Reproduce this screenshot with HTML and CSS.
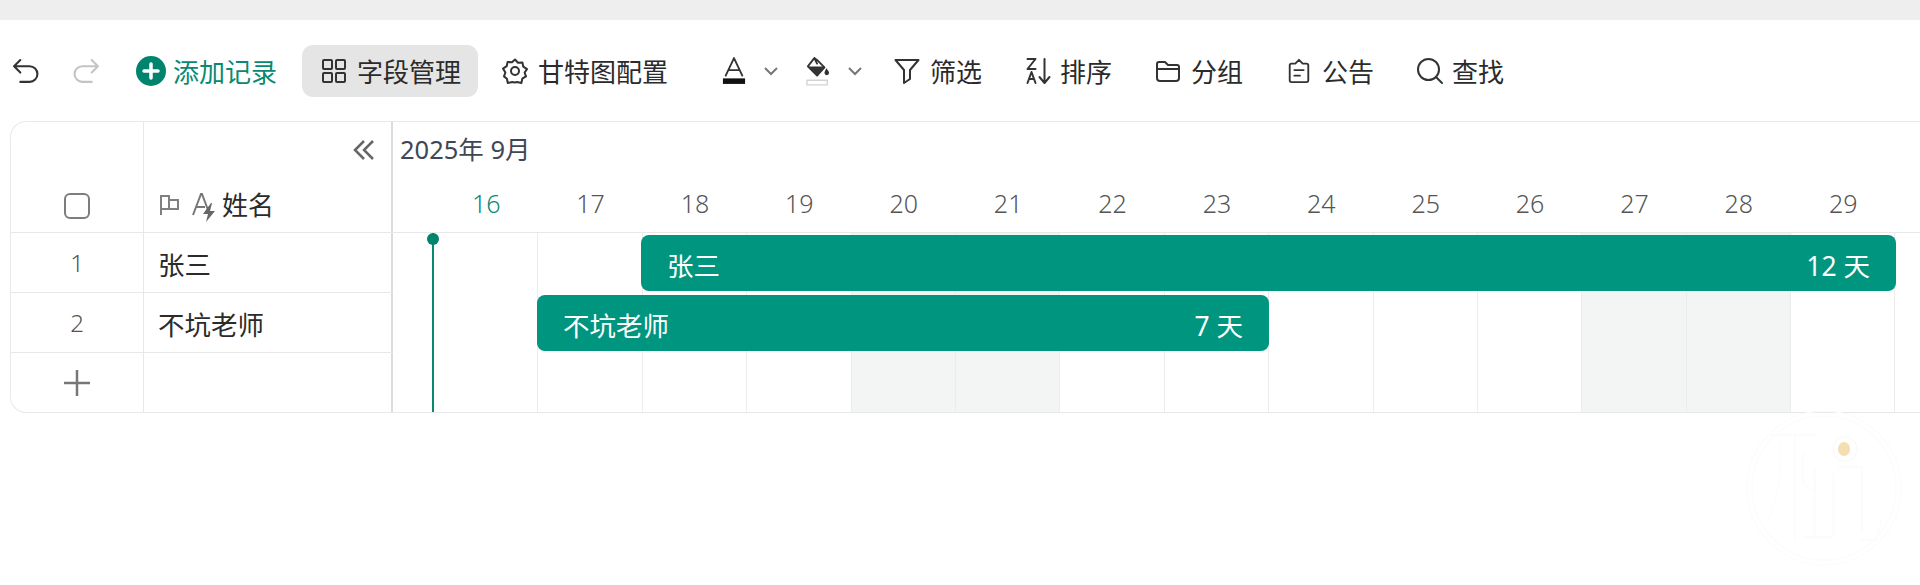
FILE: index.html
```html
<!DOCTYPE html>
<html lang="zh-CN">
<head>
    <meta charset="UTF-8">
    <meta name="viewport" content="width=device-width, initial-scale=1.0">
    <title>甘特图</title>
    <link rel="stylesheet" href="styles.css">
</head>
<body>
    <div class="top-strip"></div>

    <div class="toolbar">
        <div class="history">
            <svg class="icon icon-history" viewBox="0 0 26 26"><path d="M8 2 2 8l6 6M2 8h15a7 7 0 0 1 0 15H8"/></svg>
            <svg class="icon icon-history icon-off" viewBox="0 0 26 26"><path d="m18 2 6 6-6 6M24 8H9a7 7 0 0 0 0 15h9"/></svg>
        </div>
        <div class="tool tool-add">
            <svg class="icon icon-plus" viewBox="0 0 30 30"><circle cx="15" cy="15" r="15"/><path d="M15 8v14M8 15h14"/></svg>
            <span>添加记录</span>
        </div>
        <div class="tool tool-active">
            <svg class="icon" viewBox="0 0 26 26"><rect x="2" y="2" width="9" height="9" rx="1"/><rect x="15" y="2" width="9" height="9" rx="1"/><rect x="2" y="15" width="9" height="9" rx="1"/><rect x="15" y="15" width="9" height="9" rx="1"/></svg>
            <span>字段管理</span>
        </div>
        <div class="tool tool-gear">
            <svg class="icon" viewBox="0 0 26 26"><path d="M13 1.500l3 3.200 4.400-.3.900 4.300 3.700 2.400L22.600 14.500l1.400 3.900-3.700 2.300-.9 4.300-4.400-1L13 24.500l-2.800-.5-4.400 1-.9-4.300L2 18.400l1.400-3.900L1 10.600l3.700-2.400.9-4.300 4.400.3z"/><circle cx="13" cy="13" r="4"/></svg>
            <span>甘特图配置</span>
        </div>
        <div class="tool-format">
            <svg class="icon icon-color" viewBox="0 0 26 30"><path d="M4 20 13 1l9 19M7 14h12"/><rect class="fill-black" x="1" y="23" width="24" height="6"/></svg>
            <svg class="chevron" viewBox="0 0 16 10"><path d="m2 2 6 6 6-6"/></svg>
        </div>
        <div class="tool-format tool-bucket">
            <svg class="icon icon-color" viewBox="0 0 26 32"><path d="M9 2 2 11l10 10 8-9-7-7zM9 2l3 6"/><path class="fill-dark" d="M2 11h18l-8 10z"/><path class="fill-dark" d="M22 13c2 2.500 3 4 3 5a2.500 2.500 0 0 1-5 0c0-1 1-2.500 2-5z"/><rect class="box-light" x="1" y="26" width="22" height="5"/></svg>
            <svg class="chevron" viewBox="0 0 16 10"><path d="m2 2 6 6 6-6"/></svg>
        </div>
        <div class="tool tool-filter">
            <svg class="icon" viewBox="0 0 26 26"><path d="M1.500 2h23l-8.500 10v9l-6 4V12z"/></svg>
            <span>筛选</span>
        </div>
        <div class="tool tool-wide">
            <svg class="icon icon-sort" viewBox="0 0 26 28"><path d="M2 2h8L2 12h8M2 26l4-11 4 11M3.500 22h5M19 2v24M14 20l5 6 5-6"/></svg>
            <span>排序</span>
        </div>
        <div class="tool">
            <svg class="icon" viewBox="0 0 26 24"><path d="M2 5a2 2 0 0 1 2-2h6l3 3h9a2 2 0 0 1 2 2v11a3 3 0 0 1-3 3H5a3 3 0 0 1-3-3zM2 10h22"/></svg>
            <span>分组</span>
        </div>
        <div class="tool">
            <svg class="icon" viewBox="0 0 26 28"><path d="M9 6 13 2l4 4h4a2 2 0 0 1 2 2v16a2 2 0 0 1-2 2H5a2 2 0 0 1-2-2V8a2 2 0 0 1 2-2zM8 13h10M8 19h6"/></svg>
            <span>公告</span>
        </div>
        <div class="tool tool-wide">
            <svg class="icon icon-search" viewBox="0 0 28 28"><circle cx="12.500" cy="12.500" r="10.500"/><path d="m20 20 6 6"/></svg>
            <span>查找</span>
        </div>
    </div>

    <div class="gantt">
        <div class="side">
            <div class="side-head index-col">
                <span class="checkbox"></span>
            </div>
            <div class="side-head name-col">
                <svg class="collapse" viewBox="0 0 22 20"><path d="M11 1 2 10l9 9M20 1l-9 9 9 9"/></svg>
                <div class="field-title">
                    <svg class="flag" viewBox="0 0 22 22"><path d="M2 21V2h8v4h9v9h-9V6M10 15H2"/></svg>
                    <svg class="field-type" viewBox="0 0 26 30"><path d="M2 23 10 2h1l6 16M5 15h9"/><path class="fill-grey" d="M20 11 12 22h5l-2 8 9-11h-5l2-8z"/></svg>
                    <span>姓名</span>
                </div>
            </div>

            <div class="cell index-col">1</div>
            <div class="cell name-col">张三</div>
            <div class="cell index-col">2</div>
            <div class="cell name-col">不坑老师</div>
            <div class="cell index-col">
                <svg class="add-row" viewBox="0 0 26 26"><path d="M13 0v26M0 13h26"/></svg>
            </div>
            <div class="cell name-col"></div>
        </div>

        <div class="timeline">
            <div class="month">2025年 9月</div>
            <div class="days">
                <div class="day day-today">16</div>
                <div class="day">17</div>
                <div class="day">18</div>
                <div class="day">19</div>
                <div class="day">20</div>
                <div class="day">21</div>
                <div class="day">22</div>
                <div class="day">23</div>
                <div class="day">24</div>
                <div class="day">25</div>
                <div class="day">26</div>
                <div class="day">27</div>
                <div class="day">28</div>
                <div class="day">29</div>
            </div>
            <div class="chart">
                <div class="col"></div>
                <div class="col"></div>
                <div class="col"></div>
                <div class="col"></div>
                <div class="col col-off"></div>
                <div class="col col-off"></div>
                <div class="col"></div>
                <div class="col"></div>
                <div class="col"></div>
                <div class="col"></div>
                <div class="col"></div>
                <div class="col col-off"></div>
                <div class="col col-off"></div>
                <div class="col"></div>
                <div class="col"></div>

                <div class="today-line"></div>
                <div class="bar bar-one"><span>张三</span><span>12 天</span></div>
                <div class="bar bar-two"><span>不坑老师</span><span>7 天</span></div>
            </div>
        </div>
    </div>

    <svg class="watermark" viewBox="0 0 170 170">
        <circle cx="85" cy="85" r="77"/>
        <circle cx="85" cy="85" r="72"/>
        <path d="M29 32h50M41 40c2 28-2 55-12 77M56 32v105M64 50v30l12 8M76 64v70M63 134h31M94 70v64M98 64h25v66M121 137h17l5-23"/>
        <circle class="mark-ring" cx="106" cy="46" r="12"/>
        <ellipse class="mark-dot" cx="105" cy="46" rx="6" ry="7"/>
    </svg>
</body>
</html>
```

FILE: styles.css
```css
* {
    box-sizing: border-box;
}
html, body {
    height: 100%;
}
body {
    margin: 0;
    overflow: hidden;
    background: #fff;
    color: #2b2b2b;
    font-family: "Noto Sans", "Noto Sans CJK SC", sans-serif;
    font-size: 26px;
    position: relative;
}
svg {
    display: block;
    flex-shrink: 0;
    fill: none;
    stroke: currentColor;
}
.top-strip {
    height: 20px;
    background: #eeeeee;
}

/* toolbar */
.toolbar {
    height: 101px;
    padding: 25px 0 24px 12px;
    display: flex;
    align-items: center;
}
.history {
    display: flex;
    gap: 34px;
    margin-right: 18px;
}
.icon {
    width: 26px;
    height: 26px;
    stroke-width: 2;
    stroke-linecap: round;
    stroke-linejoin: round;
    color: #333;
}
.icon-history {
    height: 29px;
    width: 27px;
}
.icon-off {
    color: #c4c4c4;
}
.tool {
    height: 52px;
    padding: 0 18px;
    display: flex;
    align-items: center;
    gap: 10px;
    white-space: nowrap;
    margin-right: 7px;
}
.tool-wide {
    gap: 8px;
    padding-left: 17px;
}
.tool-add {
    color: #0b8871;
    gap: 7px;
    margin-right: 7px;
}
.icon-plus {
    width: 30px;
    height: 30px;
    color: #fff;
    stroke-width: 3.500;
}
.icon-plus circle {
    fill: #00846e;
    stroke: none;
}
.tool-active {
    background: #e5e5e5;
    border-radius: 11px;
    padding: 0 17px 0 19px;
    margin-right: 6px;
}
.tool-gear {
    margin-right: 36px;
}
.tool-format {
    display: flex;
    align-items: center;
    gap: 17px;
    margin-right: 27px;
}
.tool-bucket {
    margin-right: 13px;
}
.tool-filter {
    margin-right: 8px;
}
.icon-color {
    width: 24px;
    height: 30px;
}
.fill-black {
    fill: #111;
    stroke: none;
}
.fill-dark {
    fill: #333;
    stroke: none;
}
.box-light {
    stroke: #d4d4d4;
    stroke-width: 1.500;
}
.chevron {
    width: 16px;
    height: 10px;
    color: #777;
    stroke-width: 2;
}
.icon-sort {
    width: 27px;
    height: 28px;
}
.icon-search {
    width: 28px;
    height: 28px;
}

/* gantt table */
.gantt {
    margin-left: 10px;
    height: 292px;
    border: 1px solid #e8e8e8;
    border-right: none;
    border-radius: 16px 0 0 16px;
    display: flex;
    overflow: hidden;
}
.side {
    width: 382px;
    flex-shrink: 0;
    display: grid;
    grid-template-columns: 133px 249px;
    grid-template-rows: 111px 60px 60px 60px;
    border-right: 2px solid #dcdcdc;
}
.side-head, .cell {
    border-bottom: 1px solid #e8e8e8;
}
.index-col {
    border-right: 1px solid #e8e8e8;
}
.side-head {
    position: relative;
    display: flex;
    align-items: flex-end;
}
.side-head.index-col {
    justify-content: center;
    padding-bottom: 13px;
}
.checkbox {
    width: 26px;
    height: 26px;
    border: 2px solid #7d7d7d;
    border-radius: 6px;
}
.collapse {
    position: absolute;
    right: 18px;
    top: 18px;
    width: 22px;
    height: 20px;
    color: #666;
    stroke-width: 2.500;
}
.field-title {
    display: flex;
    align-items: center;
    padding: 0 0 6px 15px;
    line-height: 42px;
}
.flag {
    width: 22px;
    height: 22px;
    color: #808080;
    stroke-width: 2;
    margin-right: 10px;
}
.field-type {
    width: 26px;
    height: 30px;
    color: #777;
    stroke-width: 2;
    margin-top: 4px;
    margin-right: 5px;
}
.fill-grey {
    fill: #666;
    stroke: none;
}
.cell {
    display: flex;
    align-items: center;
}
.cell.index-col {
    justify-content: center;
    color: #555;
    font-size: 24px;
    font-weight: 300;
}
.cell.name-col {
    padding-left: 14px;
    padding-top: 2px;
    font-size: 26.500px;
}
.cell:nth-last-child(-n+2) {
    border-bottom: none;
}
.add-row {
    width: 26px;
    height: 26px;
    color: #777;
    stroke-width: 2.500;
}

/* timeline */
.timeline {
    flex: 1;
    min-width: 0;
}
.month {
    height: 55px;
    padding: 6px 0 0 7px;
    font-size: 25.500px;
    line-height: 42px;
    color: #3f4654;
}
.days {
    height: 56px;
    padding-left: 41px;
    display: flex;
    border-bottom: 1px solid #e8e8e8;
}
.day {
    width: 104.400px;
    flex-shrink: 0;
    text-align: center;
    font-size: 25px;
    font-weight: 300;
    line-height: 52px;
    color: #555;
}
.day-today {
    color: #0b8871;
}
.chart {
    position: relative;
    height: 180px;
    padding-left: 41px;
    display: flex;
}
.col {
    width: 104.400px;
    flex-shrink: 0;
    border-right: 1px solid #ececec;
}
.col-off {
    background: #f3f5f4;
}
.today-line {
    position: absolute;
    left: 39px;
    top: 0;
    bottom: 0;
    width: 2px;
    background: #0b8871;
}
.today-line::before {
    content: "";
    position: absolute;
    left: -5px;
    top: 0;
    width: 12px;
    height: 12px;
    border-radius: 50%;
    background: #00846e;
}
.bar {
    position: absolute;
    height: 56px;
    padding: 0 26px;
    display: flex;
    align-items: center;
    justify-content: space-between;
    background: #00957f;
    border-radius: 8px;
    color: #fff;
    font-size: 26.500px;
    white-space: nowrap;
}
.bar span {
    padding-top: 2px;
}
.bar-one {
    left: 248px;
    width: 1255px;
    top: 2px;
}
.bar-two {
    left: 144px;
    width: 732px;
    top: 62px;
}

/* faint logo in the corner */
.watermark {
    position: absolute;
    left: 1739px;
    top: 403px;
    width: 170px;
    height: 170px;
    color: #fcfcfc;
    stroke-width: 1.500;
}
.mark-ring {
    fill: #fff;
    stroke: #fcfaf5;
}
.mark-dot {
    fill: #f5deb0;
    stroke: none;
}
```
